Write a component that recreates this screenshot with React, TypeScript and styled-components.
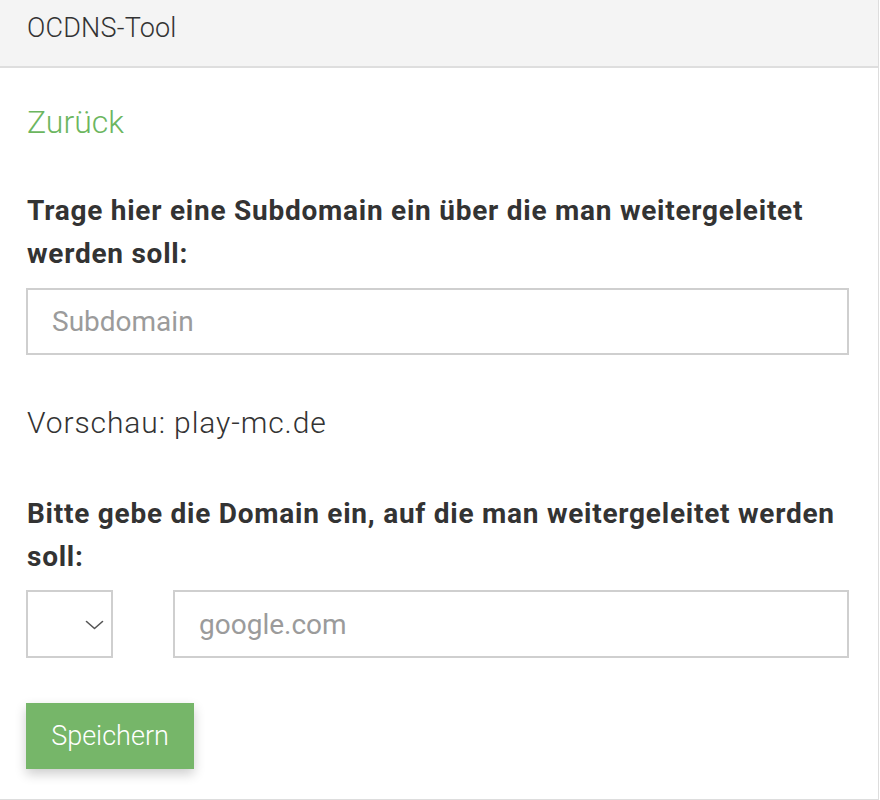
import React from "react";
import styled, { createGlobalStyle } from "styled-components";

const GlobalStyle = createGlobalStyle`
  html, body {
    margin: 0;
    padding: 0;
    background: #ffffff;
  }
  body {
    font-family: Roboto, "Liberation Sans", Arial, sans-serif;
    color: #333333;
  }
  * { box-sizing: border-box; }
`;

const Card = styled.div`
  width: 879px;
  height: 800px;
  background: #ffffff;
  border-right: 1px solid #dddddd;
  border-bottom: 1px solid #dddddd;
  display: flex;
  flex-direction: column;
`;

const Header = styled.header`
  height: 68px;
  background: #f4f4f4;
  border-bottom: 2px solid #dedede;
  padding: 12px 26px 0 27px;
  font-family: Roboto, sans-serif;
  font-weight: 300;
  font-size: 27px;
  line-height: 32px;
  letter-spacing: 0.2px;
  color: #333333;
`;

const Body = styled.main`
  padding: 35px 29px 0 26px;
  display: flex;
  flex-direction: column;
`;

const BackLink = styled.a`
  font-family: Roboto, sans-serif;
  font-weight: 300;
  font-size: 32px;
  line-height: 38px;
  color: #6cb65f;
  text-decoration: none;
  padding-left: 1px;
  align-self: flex-start;
  cursor: pointer;
`;

const Label = styled.label<{ $top: number }>`
  display: block;
  margin-top: ${(p) => p.$top}px;
  padding-left: 1px;
  font-family: Roboto, sans-serif;
  font-weight: 700;
  font-size: 28px;
  line-height: 43px;
  letter-spacing: 0.75px;
  color: #333333;
`;

const TextInput = styled.input`
  height: 67px;
  width: 100%;
  border: 2px solid #cfcfcf;
  border-radius: 0;
  padding: 0 24px;
  font-family: Roboto, sans-serif;
  font-weight: 400;
  font-size: 28px;
  color: #333333;
  background: #ffffff;
  outline: none;
  &::placeholder {
    color: #9b9b9b;
  }
`;

const SubdomainInput = styled(TextInput)`
  margin-top: 13px;
`;

const Preview = styled.p`
  margin: 50px 0 0;
  padding-left: 1px;
  font-family: Roboto, sans-serif;
  font-weight: 300;
  font-size: 30px;
  line-height: 36px;
  letter-spacing: 0.9px;
  color: #333333;
`;

const DomainRow = styled.div`
  margin-top: 12px;
  display: flex;
  gap: 60px;
  height: 68px;
`;

const SelectBox = styled.div`
  position: relative;
  width: 87px;
  flex: none;
  border: 2px solid #cfcfcf;
  background: #ffffff;
`;

const Select = styled.select`
  appearance: none;
  -webkit-appearance: none;
  width: 100%;
  height: 100%;
  border: none;
  background: transparent;
  outline: none;
  font-family: Roboto, sans-serif;
  font-size: 24px;
  padding: 0 12px;
`;

const Chevron = styled.svg`
  position: absolute;
  right: 7px;
  top: 28px;
  pointer-events: none;
`;

const DomainInput = styled(TextInput)`
  height: 68px;
  flex: 1;
`;

const SaveButton = styled.button`
  margin-top: 45px;
  align-self: flex-start;
  width: 168px;
  height: 66px;
  border: none;
  border-radius: 0;
  background: #76b669;
  color: #ffffff;
  font-family: Roboto, sans-serif;
  font-weight: 300;
  font-size: 27px;
  box-shadow: 0 5px 11px rgba(0, 0, 0, 0.2);
  cursor: pointer;
`;

export default function App() {
  return (
    <>
      <GlobalStyle />
      <Card>
        <Header>OCDNS-Tool</Header>
        <Body>
          <BackLink>Zurück</BackLink>
          <Label $top={48} htmlFor="sub">
            Trage hier eine Subdomain ein über die man weitergeleitet werden soll:
          </Label>
          <SubdomainInput id="sub" placeholder="Subdomain" />
          <Preview>Vorschau: play-mc.de</Preview>
          <Label $top={51} htmlFor="domain">
            Bitte gebe die Domain ein, auf die man weitergeleitet werden soll:
          </Label>
          <DomainRow>
            <SelectBox>
              <Select aria-label="Protokoll">
                <option value=""></option>
              </Select>
              <Chevron width="19" height="10" viewBox="0 0 19 10" fill="none">
                <polyline
                  points="1.5,1.5 9.5,8.5 17.5,1.5"
                  stroke="#555555"
                  strokeWidth="1.6"
                  strokeLinecap="round"
                  strokeLinejoin="round"
                />
              </Chevron>
            </SelectBox>
            <DomainInput id="domain" placeholder="google.com" />
          </DomainRow>
          <SaveButton>Speichern</SaveButton>
        </Body>
      </Card>
    </>
  );
}
